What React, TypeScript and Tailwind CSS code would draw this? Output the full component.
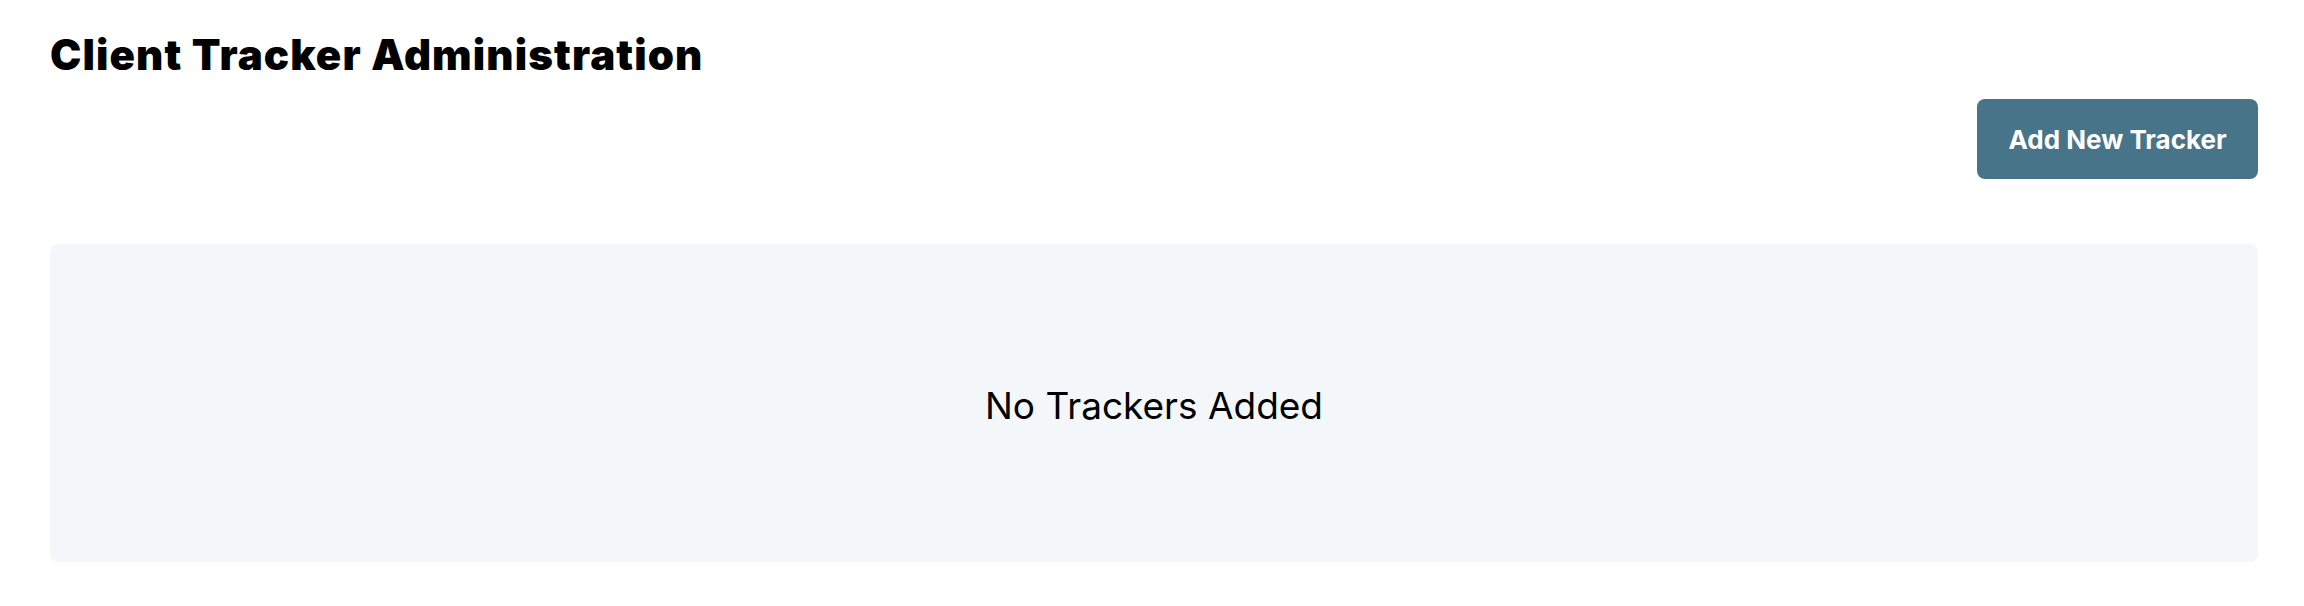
export default function App() {
  return (
    <div className="min-h-screen bg-white pl-[50px] pr-[46px] font-['Inter','Liberation_Sans',sans-serif] text-black">
      <h1 className="pt-[30px] text-[42px] leading-[50px] font-black tracking-[1.1px]">
        Client Tracker Administration
      </h1>

      <div className="mt-[19px] flex justify-end">
        <button className="h-[80px] w-[281px] rounded-lg bg-[#48748a] text-[26px] font-bold text-white">
          Add New Tracker
        </button>
      </div>

      <div className="mt-[65px] flex h-[318px] items-center justify-center rounded-lg bg-[#f4f7fa]">
        <p className="pt-[5px] text-[37px] font-normal">No Trackers Added</p>
      </div>
    </div>
  );
}
